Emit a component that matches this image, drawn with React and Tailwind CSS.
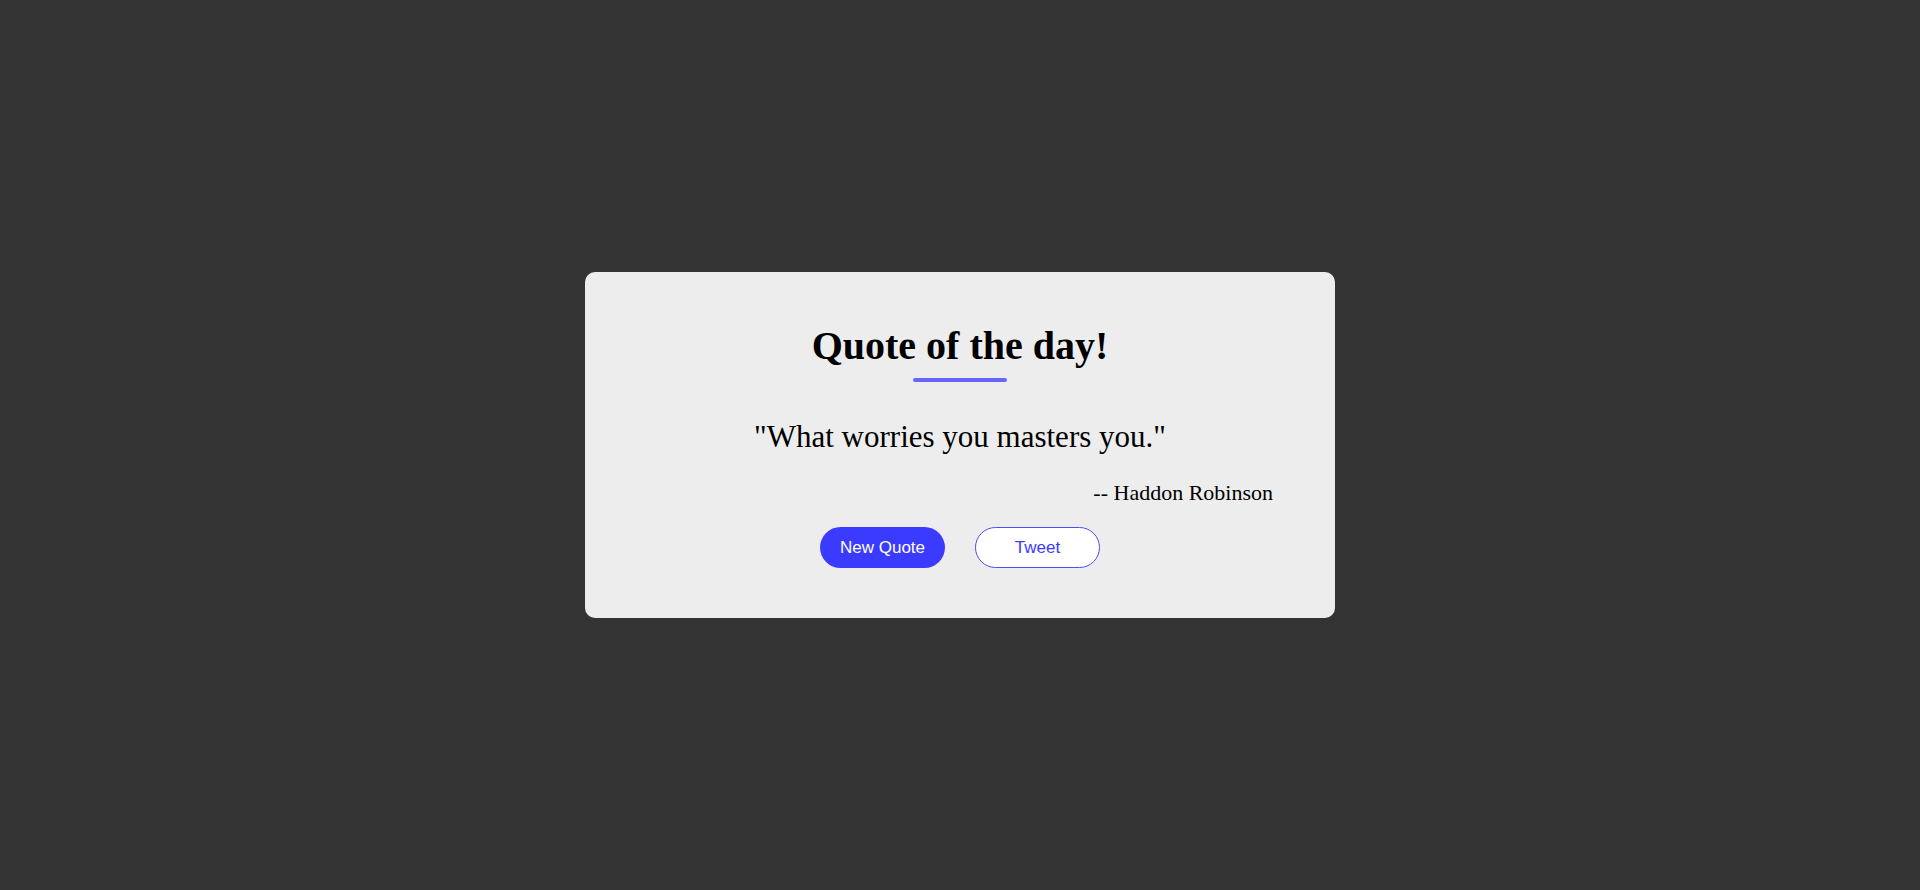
export default function App() {
  return (
    <div className="min-h-screen w-full bg-[#333333] flex items-center justify-center">
      {/* Quote card */}
      <div className="w-[750px] h-[346px] bg-[#ededed] rounded-[10px] flex flex-col items-center pt-[51px] pb-[50px] px-[62px] font-['Liberation_Serif',serif] text-black">
        <h1 className="text-[40px] leading-[46px] font-bold">Quote of the day!</h1>
        <div className="mt-[9px] w-[94px] h-[4px] rounded-full bg-[#6666ff]" />
        <p className="mt-[36px] text-[31px] leading-[37px]">"What worries you masters you."</p>
        <p className="mt-[26px] self-end text-[22px] leading-[23px]">-- Haddon Robinson</p>
        <div className="mt-[23px] flex gap-[30px] font-['Liberation_Sans',Arial,sans-serif]">
          <button className="w-[125px] h-[41px] rounded-full bg-[#3b3bff] text-white text-[17px]">
            New Quote
          </button>
          <button className="w-[125px] h-[41px] rounded-full bg-white border border-[#4d4dff] text-[#3b3bff] text-[17px]">
            Tweet
          </button>
        </div>
      </div>
    </div>
  )
}
